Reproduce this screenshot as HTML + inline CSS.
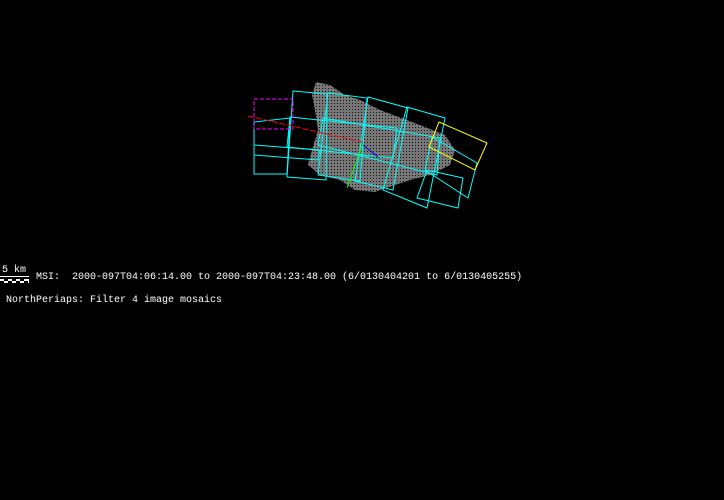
<!DOCTYPE html>
<html><head><style>
body{margin:0;background:#000;width:724px;height:500px;overflow:hidden;position:relative}
.t{position:absolute;color:#fff;font-family:"Liberation Mono",monospace;font-size:10px;line-height:10px;white-space:pre}
</style></head><body>
<svg width="724" height="500" style="position:absolute;left:0;top:0">
<defs><pattern id="d" width="3" height="3" patternUnits="userSpaceOnUse"><rect width="3" height="3" fill="#777"/><rect x="1" y="1" width="1" height="1" fill="#111"/></pattern></defs>
<polygon points="316,82 330,85 345,95 360,100 380,110 420,125 445,135 455,150 450,165 430,175 410,180 395,185 375,192 355,190 340,180 320,175 308,165 312,150 318,130 315,110 312,95" fill="url(#d)"/>
<g fill="none" stroke="#0ff" stroke-width="1">
<polygon points="293,91 327,94 326,180 287,177"/>
<polygon points="254,122 254,174 287,174 290,118"/>
<polygon points="328,93 367,98 360,181 318,175"/>
<polygon points="368,97 408,108 393,190 355,181"/>
<polygon points="407,107 445,118 427,208 383,190"/>
<polygon points="427,170 463,178 458,208 417,198"/>
<polygon points="432,137 477,163 468,198 425,170"/>
<polygon points="290,117 397,128 393,158 287,147"/>
<polygon points="323,118 440,138 437,175 318,145"/>
<polygon points="254,145 320,150 318,160 254,155"/>
</g>
<polygon points="254,99 293,99 293,129 254,129" fill="none" stroke="#f0f" stroke-dasharray="4,2"/>
<polygon points="439,122 487,143 475,170 429,147" fill="none" stroke="#ff0"/>
<line x1="248" y1="116" x2="362" y2="142" stroke="#f00" stroke-dasharray="6,2"/>
<line x1="347" y1="188" x2="363" y2="143" stroke="#0f0"/>
<line x1="363" y1="145" x2="378" y2="157" stroke="#00f"/>
<line x1="0" y1="276.5" x2="29" y2="276.5" stroke="#fff"/>
<rect x="0" y="279" width="29" height="4" fill="#fff"/>
<rect x="4" y="279" width="4" height="2" fill="#000"/>
<rect x="12" y="279" width="4" height="2" fill="#000"/>
<rect x="20" y="279" width="4" height="2" fill="#000"/>
<rect x="0" y="281" width="4" height="2" fill="#000"/>
<rect x="8" y="281" width="4" height="2" fill="#000"/>
<rect x="16" y="281" width="4" height="2" fill="#000"/>
<rect x="24" y="281" width="4" height="2" fill="#000"/>
</svg>
<div class="t" style="left:2px;top:266px">5 km</div>
<div class="t" style="left:36px;top:273px">MSI:  2000-097T04:06:14.00 to 2000-097T04:23:48.00 (6/0130404201 to 6/0130405255)</div>
<div class="t" style="left:6px;top:296px">NorthPeriaps: Filter 4 image mosaics</div>
</body></html>
